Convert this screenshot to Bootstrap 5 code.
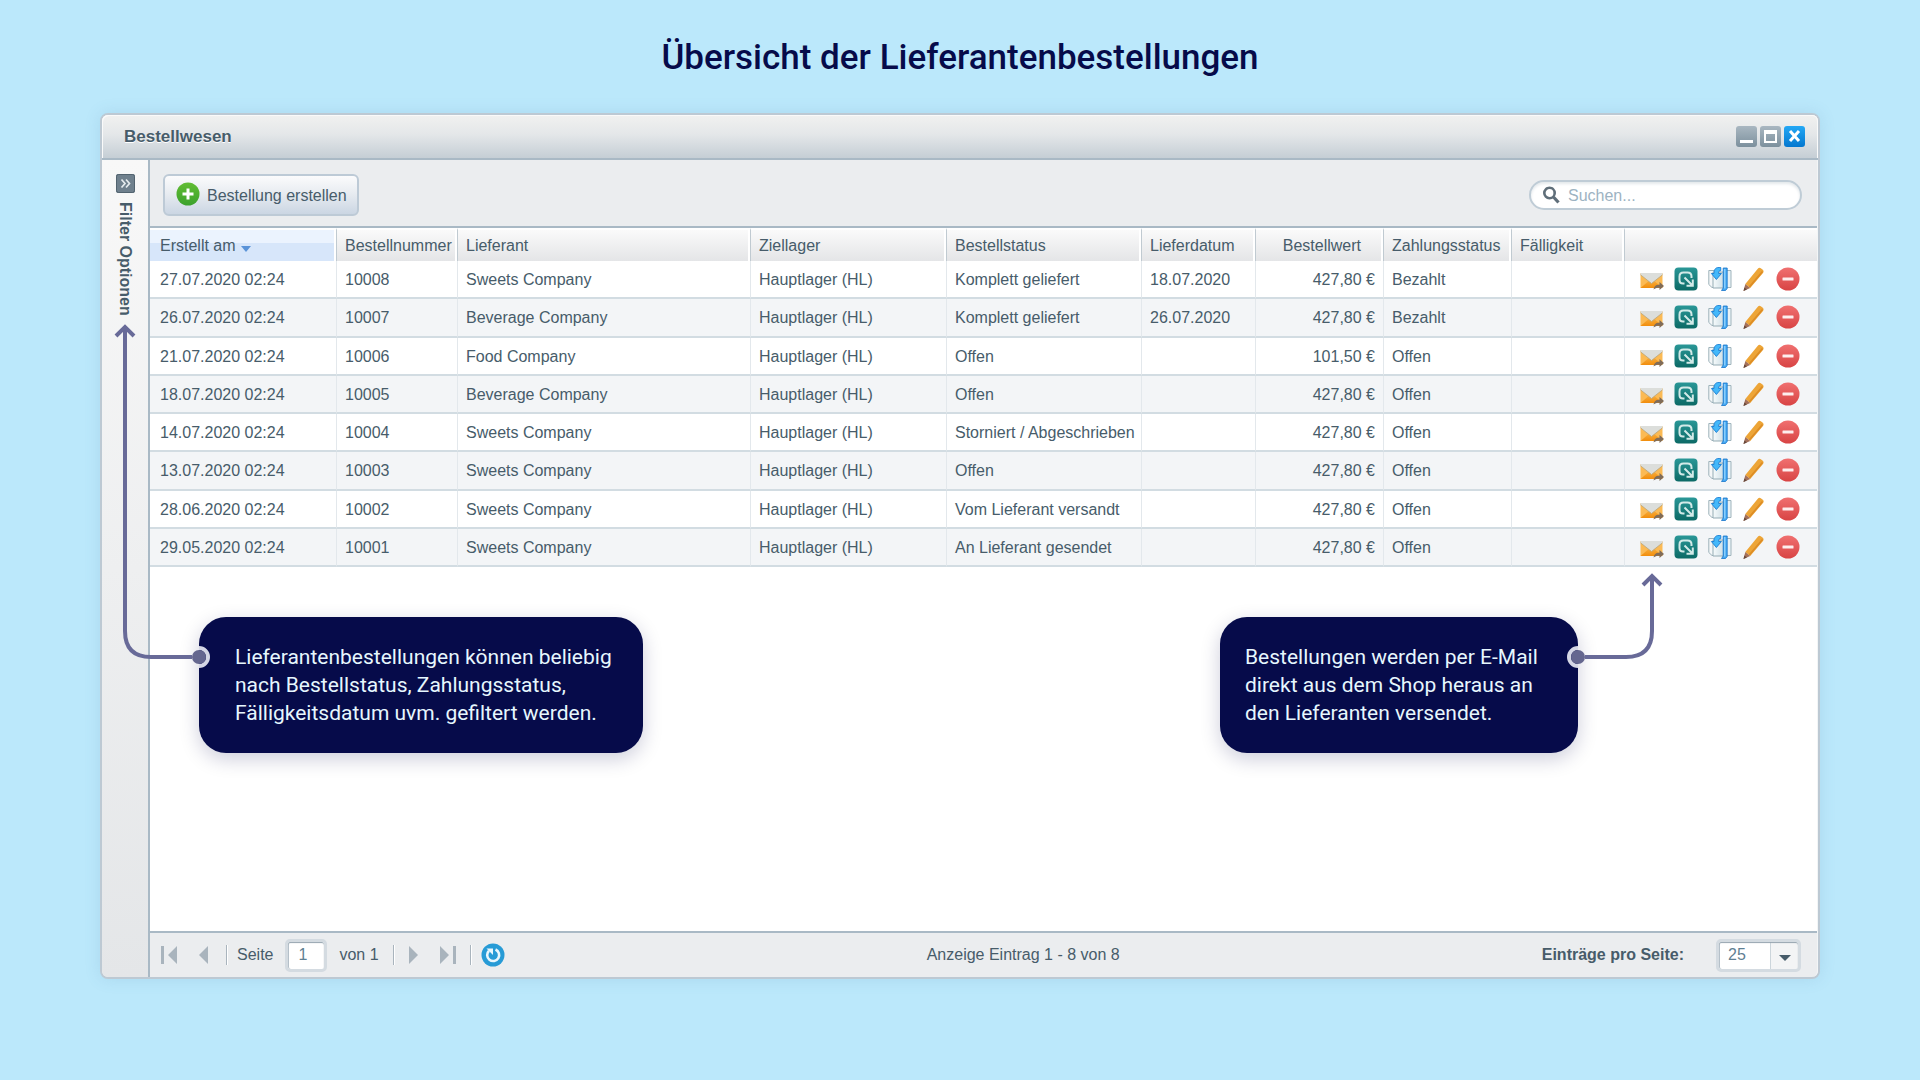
<!DOCTYPE html>
<html lang="de">
<head>
<meta charset="utf-8">
<meta name="viewport" content="width=device-width, initial-scale=1">
<title>Übersicht der Lieferantenbestellungen</title>
<link href="https://cdn.jsdelivr.net/npm/bootstrap@5.3.0/dist/css/bootstrap.min.css" rel="stylesheet">
<style>
  body { background: #bbe8fb; color: #475c6a; font: 16px/20px "Liberation Sans", Arial, sans-serif; padding: 0 100px 101px; }
  .page-title { font: 500 35px/40px Roboto, sans-serif; color: #060b4a; padding: 38px 0 35px; margin: 0; }
  .app-window { border: 2px solid #bdc9d3; border-radius: 8px; background: #ebedef; box-shadow: 0 0 16px rgba(80,130,170,.16); }
  .title-bar { height: 45px; padding: 0 13px 0 22px; border-bottom: 2px solid #a9b9c5; border-radius: 6px 6px 0 0; background: linear-gradient(#f1f1f0, #e4e7e9 45%, #c5ced5); box-shadow: inset 1px 1px 0 #fafafa, inset -1px 0 0 #fafafa; text-shadow: 0 1px 0 #fff; }
  .title-bar h2 { font: 700 17px/20px "Liberation Sans", Arial, sans-serif; margin: 0; }
  .win-tools { gap: 3px; }
  .plain-btn { border: 0; background: none; padding: 0; line-height: 0; color: inherit; }
  .rail { width: 48px; border-right: 2px solid #a9b9c5; background: linear-gradient(#f8f8f8, #e4e6e8); padding-top: 14px; gap: 9px; border-radius: 0 0 0 6px; }
  .rail-label { writing-mode: vertical-rl; font-weight: 700; line-height: 18px; }
  .main-pane { border-right: 1px solid #f3f5f6; border-radius: 0 0 6px 0; min-width: 0; }
  .tool-row { height: 68px; padding: 3px 15px 0 13px; border-bottom: 2px solid #a9b9c5; }
  .create-btn { height: 42px; padding: 2px 10px 0 11px; gap: 7px; border: 2px solid #bdcad6; border-radius: 6px; background: linear-gradient(#fbfbfc, #e8ecf1 45%, #cbd6e3); color: inherit; }
  .search-box { width: 273px; height: 30px; border: 2px solid #bfccd6; border-radius: 15px; background: #fff; box-shadow: inset 0 2px 3px #e3e8eb; padding: 0 11px; gap: 8px; }
  .search-box input { border: 0; outline: 0; background: none; padding: 2px 0 0; width: 100%; color: inherit; }
  .search-box input::placeholder { color: #9db3c2; opacity: 1; }
  .orders { width: 100%; table-layout: fixed; border-collapse: separate; border-spacing: 0; height: 339px; }
  .orders th { height: 33px; font-weight: 400; padding: 0 0 0 8px; white-space: nowrap; background: linear-gradient(#fafafa, #e4e5e7); border-left: 1px solid #c0cad1; border-top: 2px solid #fff; border-right: 2px solid #fff; }
  .orders td { padding: 2px 0 0 8px; white-space: nowrap; border-left: 1px solid #e3e8ec; border-bottom: 2px solid #d2dce2; background: #fff; }
  .orders tr > :first-child { border-left: 0; padding-left: 10px; }
  .orders tr:nth-child(even) td { background: #f3f5f7; }
  .orders th.sorted { background: linear-gradient(#ebf3fe 0 42%, #d7e6fa 42%); }
  .orders th.sorted svg { vertical-align: -1px; }
  .orders td.amount { text-align: right; padding: 2px 8px 0 0; }
  .orders th.amount { text-align: right; padding: 0 20px 0 0; }
  .orders td.tools, .orders th.tools { padding: 0 17px 0 15px; border-right: 0; }
  .body-pane { background: #fff; padding: 50px 239px 0 49px; }
  .callout { position: relative; height: 136px; border-radius: 27px; background: #060b4a; color: #e6f7fe; font: 21px/28px Roboto, sans-serif; padding: 26px 25px; white-space: nowrap; box-shadow: 0 6px 20px rgba(6,11,74,.2); margin: 0; }
  .callout-filter { width: 444px; padding-left: 36px; }
  .callout-mail { width: 358px; }
  .link-line { position: absolute; overflow: visible; }
  .callout-filter .link-line { right: calc(100% - 12px); bottom: 84px; }
  .callout-mail .link-line { left: calc(100% - 12px); bottom: 84px; }
  .pager { height: 46px; padding: 0 16px 0 11px; border-top: 2px solid #a9b9c5; }
  .step { margin-left: 22px; }
  .divider { width: 2px; height: 20px; margin: 0 14px; background: #a9b4bd; border-right: 1px solid #fff; }
  .divider-tight { margin-right: 9px; }
  .framed { border: 3px solid #d4dbe1; border-radius: 5px; background: #fff; color: #5f7f93; box-shadow: inset 0 1px 1px #95a4af, inset 1px 0 0 #b9c4cc; }
  .page-input { width: 42px; height: 33px; padding: 0 0 0 10px; }
  .select-wrap { width: 85px; height: 33px; position: relative; }
  .select-wrap select { appearance: none; background: linear-gradient(90deg, #fff 51px, #ccd5db 51px 52px, #f3f4f5 52px); width: 100%; height: 100%; padding: 0 0 0 9px; }
  .select-wrap svg { position: absolute; right: 10px; top: 16px; pointer-events: none; }
</style>
</head>
<body class="min-vh-100 d-flex flex-column">
<svg width="0" height="0" class="position-absolute" aria-hidden="true">
  <defs>
    <linearGradient id="gMail" x2="0" y2="1"><stop stop-color="#f9b64a"/><stop offset="1" stop-color="#f18d0c"/></linearGradient>
    <linearGradient id="gTeal" x2="0" y2="1"><stop stop-color="#2a9797"/><stop offset="1" stop-color="#0c6a66"/></linearGradient>
    <linearGradient id="gRed" x2="0" y2="1"><stop stop-color="#f07070"/><stop offset="1" stop-color="#d84444"/></linearGradient>
    <linearGradient id="gGreen" x2="0" y2="1"><stop stop-color="#62bd34"/><stop offset="1" stop-color="#3ba22c"/></linearGradient>
    <linearGradient id="gGrey" x2="0" y2="1"><stop stop-color="#a9b7c1"/><stop offset="1" stop-color="#7c909d"/></linearGradient>
    <linearGradient id="gBlue" x2="0" y2="1"><stop stop-color="#23a8f5"/><stop offset="1" stop-color="#0477cf"/></linearGradient>
    <linearGradient id="gPage" x2="1"><stop stop-color="#f6fbfc"/><stop offset="1" stop-color="#cfdfe5"/></linearGradient>
    <symbol id="iMail" viewBox="0 0 24 24"><path d="M.5 6h22v15H.5z" fill="#fbba54"/><path d="M.5 21L11.500 11.500l11 9.500z" fill="url(#gMail)"/><path d="M.5 6h22v1.800L11.500 16.500 .5 7.800z" fill="#dcdedb"/><path d="M.5 7.800L11.500 16.500l11-8.700" fill="none" stroke="#b9a47a" stroke-width=".8"/><path d="M13.500 22.500c.5-3.500 3-5.200 6-4.700V15l4.500 4-4.500 4v-2.300c-2.500-.2-4 .3-6 1.800z" fill="#806c58"/></symbol>
    <symbol id="iTeal" viewBox="0 0 24 24"><rect x=".5" y=".5" width="23" height="23" rx="4" fill="url(#gTeal)"/><path d="M10.500 16.500H9q-3.500 0-3.500-3.500V9.500q0-4 4-4h4q4 0 4 4v1.500M10.500 10.500l7.500 7.500M18.800 12.500v6.300h-6.300" fill="none" stroke="#d3eae8" stroke-width="2"/></symbol>
    <symbol id="iStock" viewBox="0 0 24 24"><path d="M.8 3.500h8v17H4L.8 17.500z" fill="#f4f7f8" stroke="#9db2ba"/><path d="M5 5h10.500v16H5z" fill="url(#gPage)" stroke="#94abb4"/><path d="M18 3.500h5v17h-5z" fill="#eaf2f5" stroke="#9fb4bc"/><path d="M15.200 1h4v20.500L17.500 23.500h-4l1.700-2.500z" fill="#43a8f2" stroke="#1774c9" stroke-width=".8" stroke-linejoin="round"/><path d="M16.800 2v19.500" stroke="#9bd8ff" stroke-width="1.200"/><path d="M12.800.6C8-.2 5.800 2 6 6.500H3.400l5 6L13.400 6.500h-2.800c-.2-2 .5-3 2.200-2.800z" fill="#43b8fa" stroke="#1b7ed2" stroke-width=".9" stroke-linejoin="round"/></symbol>
    <symbol id="iPen" viewBox="0 0 24 24"><path d="M15.800 1.800q1.300-1.700 3-.6l2 1.500q1.500 1.200.4 3L8.200 21 3.300 17z" fill="#eda537"/><path d="M20.500 4.500L7.300 20" stroke="#dc8c25" stroke-width="1.600"/><path d="M3.300 17L8.200 21 1.500 24z" fill="#a3705a"/><path d="M2.400 20.500l2.500 2L1.500 24z" fill="#66483c"/></symbol>
    <symbol id="iDel" viewBox="0 0 24 24"><circle cx="12" cy="12" r="11.500" fill="url(#gRed)"/><rect x="6.500" y="10.500" width="11" height="3" rx=".5" fill="#fdeeee"/></symbol>
  </defs>
</svg>

<h1 class="page-title text-center">Übersicht der Lieferantenbestellungen</h1>

<section class="app-window flex-grow-1 d-flex flex-column">
  <header class="title-bar d-flex align-items-center justify-content-between">
    <h2>Bestellwesen</h2>
    <div class="win-tools d-flex">
      <button class="plain-btn" aria-label="Minimieren"><svg width="21" height="21"><rect width="21" height="21" rx="3" fill="url(#gGrey)"/><rect x="4" y="14" width="13" height="3" fill="#fff"/></svg></button>
      <button class="plain-btn" aria-label="Maximieren"><svg width="21" height="21"><rect width="21" height="21" rx="3" fill="url(#gGrey)"/><path d="M4 4h13v13H4zM6 8v7h9V8z" fill="#fff" fill-rule="evenodd"/></svg></button>
      <button class="plain-btn" aria-label="Schließen"><svg width="21" height="21"><rect width="21" height="21" rx="3" fill="url(#gBlue)"/><path d="M6 5l9 10M15 5L6 15" stroke="#fff" stroke-width="3"/></svg></button>
    </div>
  </header>

  <div class="d-flex flex-grow-1">
    <aside class="rail d-flex flex-column align-items-center flex-shrink-0">
      <button class="plain-btn" aria-label="Filter einblenden"><svg width="19" height="19"><rect width="19" height="19" rx="2" fill="#6f808d"/><rect x=".5" y=".5" width="18" height="18" rx="2" fill="none" stroke="#52636f"/><path d="M5.500 5.500l3.500 4-3.500 4M10 5.500l3.500 4-3.500 4" fill="none" stroke="#e6ebee" stroke-width="1.700"/></svg></button>
      <span class="rail-label">Filter Optionen</span>
    </aside>

    <div class="main-pane d-flex flex-column flex-grow-1">
      <div class="tool-row d-flex align-items-center justify-content-between">
        <button class="create-btn d-flex align-items-center">
          <svg width="24" height="28" viewBox="0 0 24 28"><circle cx="12" cy="12" r="11.500" fill="url(#gGreen)"/><path d="M12 6.500v11M6.500 12h11" stroke="#fff" stroke-width="3"/></svg>
          Bestellung erstellen
        </button>
        <label class="search-box d-flex align-items-center">
          <svg width="18" height="18" class="flex-shrink-0"><circle cx="7.500" cy="7" r="5.200" fill="none" stroke="#5f6e79" stroke-width="2.600"/><path d="M11.500 11l5 5.500" stroke="#5f6e79" stroke-width="3.200"/></svg>
          <input type="text" placeholder="Suchen..." aria-label="Suchen">
        </label>
      </div>

      <table class="orders">
        <colgroup><col style="width:186px"><col style="width:121px"><col><col style="width:196px"><col style="width:195px"><col style="width:114px"><col style="width:128px"><col style="width:128px"><col style="width:113px"><col style="width:193px"></colgroup>
        <thead><tr><th class="sorted" aria-sort="descending">Erstellt am <svg width="12" height="6"><path d="M1 0h10L6 6z" fill="#5a93d8"/></svg></th><th>Bestellnummer</th><th>Lieferant</th><th>Ziellager</th><th>Bestellstatus</th><th>Lieferdatum</th><th class="amount">Bestellwert</th><th>Zahlungsstatus</th><th>Fälligkeit</th><th class="tools"></th></tr></thead>
        <tbody id="orderRows"></tbody>
      </table>

      <div class="body-pane flex-grow-1 d-flex justify-content-between align-items-start">
        <p class="callout callout-filter">Lieferantenbestellungen können beliebig<br>nach Bestellstatus, Zahlungsstatus,<br>Fälligkeitsdatum uvm. gefiltert werden.
          <svg class="link-line" width="98" height="345" viewBox="0 0 98 345"><path d="M86 324a9 9 0 0 1 0 18" fill="none" stroke="#d5d7e5" stroke-width="4"/><path d="M12 3v304q0 26 26 26h41" fill="none" stroke="#686a98" stroke-width="4"/><path d="M3 12l9-9 9 9" fill="none" stroke="#686a98" stroke-width="4"/><circle cx="86" cy="333" r="7" fill="#65678f"/></svg>
        </p>
        <p class="callout callout-mail">Bestellungen werden per E-Mail<br>direkt aus dem Shop heraus an<br>den Lieferanten versendet.
          <svg class="link-line" width="98" height="96" viewBox="0 0 98 96"><path d="M12 75a9 9 0 0 0 0 18" fill="none" stroke="#d5d7e5" stroke-width="4"/><path d="M86 3v55q0 26-26 26H19" fill="none" stroke="#686a98" stroke-width="4"/><path d="M77 12l9-9 9 9" fill="none" stroke="#686a98" stroke-width="4"/><circle cx="12" cy="84" r="7" fill="#65678f"/></svg>
        </p>
      </div>

      <footer class="pager d-flex align-items-center justify-content-between">
        <div class="d-flex align-items-center">
          <button class="plain-btn" aria-label="Erste Seite"><svg width="16" height="18"><path d="M0 0h3v18H0zM16 0v18L7 9z" fill="#a9b4bd"/></svg></button>
          <button class="plain-btn step me-1" aria-label="Vorherige Seite"><svg width="9" height="18"><path d="M9 0v18L0 9z" fill="#a9b4bd"/></svg></button>
          <span class="divider divider-tight"></span>
          <label for="pageNo" class="me-2">Seite</label>
          <input id="pageNo" class="framed page-input mx-1" type="text" value="1">
          <span class="ms-2">von 1</span>
          <span class="divider"></span>
          <button class="plain-btn" aria-label="Nächste Seite"><svg width="9" height="18"><path d="M0 0v18l9-9z" fill="#a9b4bd"/></svg></button>
          <button class="plain-btn step" aria-label="Letzte Seite"><svg width="16" height="18"><path d="M13 0h3v18h-3zM0 0v18l9-9z" fill="#a9b4bd"/></svg></button>
          <span class="divider divider-tight"></span>
          <button class="plain-btn" aria-label="Aktualisieren"><svg width="24" height="24"><circle cx="12" cy="12" r="11.500" fill="#279bd6"/><path d="M14.500 6.500a6 6 0 1 1-6.500 1.200" fill="none" stroke="#e9f7fd" stroke-width="2.600"/><path d="M5.500 5.500h6.500v6.500z" fill="#e9f7fd"/></svg></button>
        </div>
        <span>Anzeige Eintrag 1 - 8 von 8</span>
        <div class="d-flex align-items-center">
          <label for="perPage" class="fw-bold me-4 pe-2">Einträge pro Seite:</label>
          <div class="select-wrap"><select id="perPage" class="framed"><option>25</option><option>50</option></select><svg width="12" height="6"><path d="M0 0h12L6 6z" fill="#475c6a"/></svg></div>
        </div>
      </footer>
    </div>
  </div>
</section>

<script src="https://cdn.jsdelivr.net/npm/bootstrap@5.3.0/dist/js/bootstrap.bundle.min.js"></script>
<script>
  const orders = [
    ["27.07.2020 02:24", "10008", "Sweets Company", "Komplett geliefert", "18.07.2020", "427,80 €", "Bezahlt"],
    ["26.07.2020 02:24", "10007", "Beverage Company", "Komplett geliefert", "26.07.2020", "427,80 €", "Bezahlt"],
    ["21.07.2020 02:24", "10006", "Food Company", "Offen", "", "101,50 €", "Offen"],
    ["18.07.2020 02:24", "10005", "Beverage Company", "Offen", "", "427,80 €", "Offen"],
    ["14.07.2020 02:24", "10004", "Sweets Company", "Storniert / Abgeschrieben", "", "427,80 €", "Offen"],
    ["13.07.2020 02:24", "10003", "Sweets Company", "Offen", "", "427,80 €", "Offen"],
    ["28.06.2020 02:24", "10002", "Sweets Company", "Vom Lieferant versandt", "", "427,80 €", "Offen"],
    ["29.05.2020 02:24", "10001", "Sweets Company", "An Lieferant gesendet", "", "427,80 €", "Offen"]
  ];
  const actions = [["iMail", "E-Mail senden"], ["iTeal", "Status ändern"], ["iStock", "Wareneingang buchen"], ["iPen", "Bearbeiten"], ["iDel", "Löschen"]];
  const tools = actions.map(([id, label]) => `<button class="plain-btn" aria-label="${label}"><svg width="24" height="24"><use href="#${id}"/></svg></button>`).join("");
  document.getElementById("orderRows").innerHTML = orders.map(([made, no, supplier, state, due, sum, paid]) =>
    `<tr><td>${made}</td><td>${no}</td><td>${supplier}</td><td>Hauptlager (HL)</td><td>${state}</td><td>${due}</td><td class="amount">${sum}</td><td>${paid}</td><td></td><td class="tools"><div class="d-flex justify-content-between">${tools}</div></td></tr>`).join("");
</script>
</body>
</html>
